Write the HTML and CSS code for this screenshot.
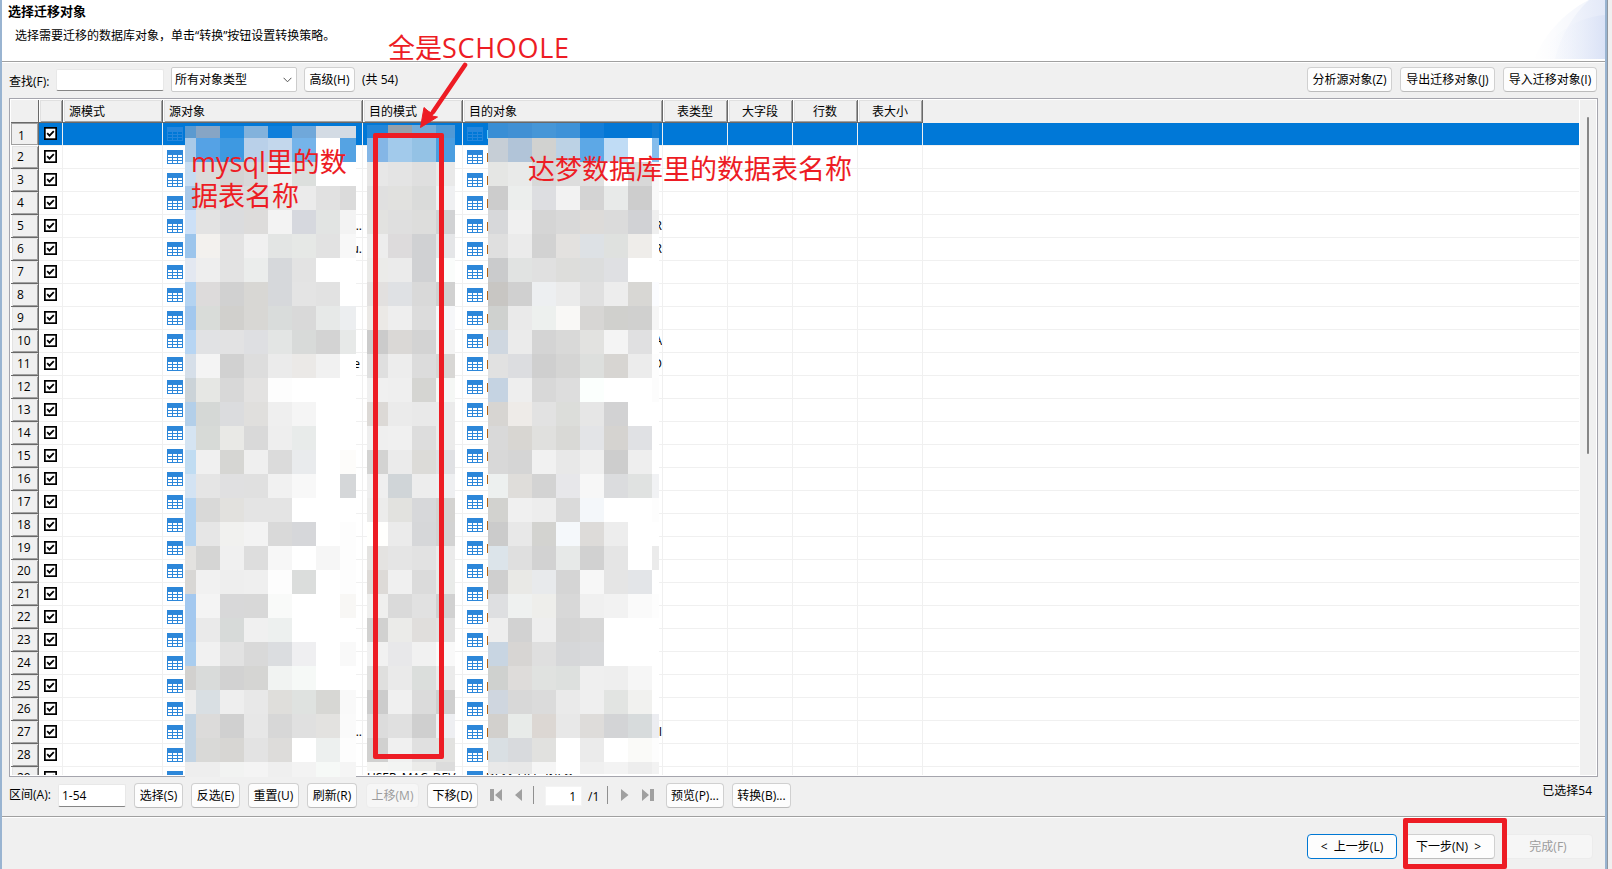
FILE: index.html
```html
<!DOCTYPE html>
<html lang="zh-CN">
<head>
<meta charset="utf-8">
<title>选择迁移对象</title>
<link rel="stylesheet" href="styles.css">
</head>
<body>
<svg class="defs" width="0" height="0" aria-hidden="true">
  <symbol id="table-icon" viewBox="0 0 16 14"><path fill="currentColor" fill-rule="evenodd" d="M0 0h16v14H0zM1 5v2h4V5zM6 5v2h4V5zM11 5v2h4V5zM1 8v2h4V8zM6 8v2h4V8zM11 8v2h4V8zM1 11v2h4v-2zM6 11v2h4v-2zM11 11v2h4v-2z"/></symbol>
  <symbol id="check-icon" viewBox="0 0 13 13"><path fill="#000" d="M0 0h13v13H0z"/><path fill="#fff" d="M1.7 1.7h9.6v9.6H1.7z"/><path fill="none" stroke="#000" stroke-width="1.8" d="M3.2 6.2l2.3 2.4 4.3-4.5"/></symbol>
</svg>
<div class="window">
  <header class="banner">
    <div class="banner-text">
      <h1 class="title">选择迁移对象</h1>
      <p class="subtitle">选择需要迁移的数据库对象，单击“转换”按钮设置转换策略。</p>
    </div>
    <svg class="banner-art" width="75" height="59" viewBox="0 0 75 59">
      <defs><linearGradient id="fade"><stop offset="0" stop-color="#fff"/><stop offset="1" stop-color="#e3e9f8"/></linearGradient>
      <linearGradient id="fade2"><stop offset="0.1" stop-color="#fff" stop-opacity="0"/><stop offset="1" stop-color="#dae2f6"/></linearGradient></defs>
      <path fill="url(#fade)" d="M4 59C14 36 32 14 59 0H75V59z"/>
      <path fill="#fff" opacity=".45" d="M4 59C14 36 32 14 59 0C42 16 31 36 25 59z"/>
      <path fill="url(#fade2)" d="M4 59C24 34 46 17 75 15V59z"/>
    </svg>
  </header>

  <div class="toolbar">
    <span class="find-label">查找(F):</span>
    <span class="field find-field"></span>
    <span class="select">所有对象类型<svg width="9" height="6" viewBox="0 0 9 6"><path d="M.6.8l3.9 4 3.9-4" fill="none" stroke="#555" stroke-width="1"/></svg></span>
    <span class="btn w51">高级(H)</span>
    <span class="count">(共 54)</span>
    <span class="spacer"></span>
    <span class="btn w85">分析源对象(Z)</span>
    <span class="btn w95">导出迁移对象(J)</span>
    <span class="btn w94">导入迁移对象(I)</span>
  </div>

  <div class="frame">
    <div class="grid" id="grid">
      <div class="row head">
        <span class="corner"></span><span class="hcell"></span><span class="hcell">源模式</span><span class="hcell">源对象</span><span class="hcell">目的模式</span><span class="hcell">目的对象</span><span class="hcell mid">表类型</span><span class="hcell mid">大字段</span><span class="hcell mid">行数</span><span class="hcell mid">表大小</span><span class="hrest"></span>
      </div>
    </div>
    <div class="scrollbar"><div class="thumb"></div></div>
  </div>

  <div class="pager">
    <span class="range-label">区间(A):</span>
    <span class="field range-field">1-54</span>
    <span class="btn w49">选择(S)</span>
    <span class="btn w49">反选(E)</span>
    <span class="btn w51">重置(U)</span>
    <span class="btn w50">刷新(R)</span>
    <span class="btn w53 off up">上移(M)</span>
    <span class="btn w51">下移(D)</span>
    <svg class="nav" width="34" height="12" viewBox="0 0 34 12"><path fill="#a0a0a0" d="M0 0h4v12H0zM12 0v12L5 6zM32 0v12L25 6z"/></svg>
    <i class="sep"></i>
    <span class="page-field">1</span>
    <span class="pages">/1</span>
    <i class="sep sep2"></i>
    <svg class="nav" width="33" height="12" viewBox="0 0 33 12"><path fill="#a0a0a0" d="M0 0v12l7.500-6zM21 0v12l7-6zM29 0h4v12h-4z"/></svg>
    <span class="btn w58 preview">预览(P)...</span>
    <span class="btn w59">转换(B)...</span>
    <span class="spacer"></span>
    <span class="selected-count">已选择54</span>
  </div>

  <footer class="actions">
    <span class="btn w90 focus">&lt;&nbsp; 上一步(L)</span>
    <span class="btn w90 next">下一步(N)&nbsp; &gt;</span>
    <span class="btn w90 off">完成(F)</span>
  </footer>
</div>

<div class="mosaic mosaic-src" id="mosaic-src"></div>
<div class="mosaic mosaic-schema" id="mosaic-schema"></div>
<div class="mosaic mosaic-dst" id="mosaic-dst"></div>

<div class="mark mark-column"></div>
<div class="mark mark-next"></div>
<svg class="arrow" width="60" height="70" viewBox="0 0 60 70"><path d="M50 3L18 50" stroke="#ed1c24" stroke-width="4.600" stroke-linecap="round"/><path fill="#ed1c24" stroke="#ed1c24" stroke-width="1" stroke-linejoin="round" d="M5.500 65.500L9 45.500 13 49 18 52 17 54 22.500 55z"/></svg>
<div class="note note-schema">全是<span class="wide">SCHOOLE</span></div>
<div class="note note-src">mysql里的数<br>据表名称</div>
<div class="note note-dst">达梦数据库里的数据表名称</div>
<script src="app.js"></script>
</body>
</html>
```
FILE: styles.css
```css
* { box-sizing: border-box; }
html { height: 869px; overflow: hidden; }
body {
  margin: 0;
  position: relative;
  width: 1612px;
  height: 869px;
  overflow: hidden;
  background: #f0f0f0;
  color: #000;
  font: 12px/16px "Open Sans", "Noto Sans CJK SC", sans-serif;
  white-space: nowrap;
}
.defs { position: absolute; }
.window {
  width: 1608px;
  height: 869px;
  display: flex;
  flex-direction: column;
  border-left: 2px solid #99b4d1;
  border-right: 1px solid #8e96a0;
  box-shadow: inset -2px 0 #99b4d1;
  padding-right: 2px;
}
.banner {
  height: 63px;
  flex: none;
  display: flex;
  justify-content: space-between;
  background: linear-gradient(#fff 61px, #a0a0a0 61px, #a0a0a0 62px, #fff 62px);
}
.title { margin: 3px 0 0 6px; font-size: 13px; line-height: 17px; font-weight: 700; }
.subtitle { margin: 8px 0 0 13px; }
.banner-art { display: block; }

.toolbar { height: 35px; flex: none; display: flex; align-items: flex-start; padding: 4px 8px 0 7px; }
.find-label { width: 47px; padding-top: 7px; }
.field {
  background: #fff;
  border: 1px solid #e8e8e8;
  border-bottom-color: #868686;
  border-radius: 2px;
}
.find-field { width: 108px; height: 22px; margin: 2px 7px 0 0; }
.select {
  width: 126px; height: 25px; margin-right: 7px; padding: 0 4px 0 3px;
  display: flex; align-items: center; justify-content: space-between;
  background: #fff; border: 1px solid #ccc; border-radius: 2px;
}
.count { padding: 5px 0 0 7px; }
.spacer { flex: 1; }
.btn {
  height: 25px; flex: none;
  line-height: 23px; text-align: center;
  background: #fdfdfd;
  border: 1px solid #d0d0d0;
  border-bottom-color: #bcbcbc;
  border-radius: 4px;
}
.btn + .btn { margin-left: 8px; }
.btn + .up { margin-left: 9px; }
.off { color: #9c9c9c; background: #f6f6f6; border-color: #ececec; }
.focus { border-color: #0078d4; }
.next { padding-right: 3px; }
.w49 { width: 49px; } .w50 { width: 50px; } .w51 { width: 51px; } .w53 { width: 53px; }
.w58 { width: 58px; } .w59 { width: 59px; } .w85 { width: 85px; } .w90 { width: 90px; }
.w94 { width: 94px; } .w95 { width: 95px; }

.frame {
  width: 1589px; height: 679px; flex: none;
  margin-left: 7px; padding: 1px 1px 0;
  display: flex; justify-content: space-between;
  background: #fff; border: 1px solid #a5a5ad;
}
.grid { width: 1568px; height: 675px; overflow: hidden; }
.row {
  display: grid; height: 23px;
  grid-template-columns: 28px 24px 100px 200px 100px 200px 65px 65px 65px 65px 1fr;
}
.cell {
  display: flex; align-items: center; overflow: hidden;
  border-right: 1px solid #f0f0f0; border-bottom: 1px solid #f0f0f0;
}
.cell:last-child { border-right: 0; }
.picked .cell { background: #0078d7; }
.corner, .hcell, .hrest { background: #f0f0f0; }
.corner { box-shadow: inset -1px -1px #696969; }
.hcell {
  padding: 4px 0 0 6px;
  border-right: 1px solid #696969; border-bottom: 1px solid #696969;
  box-shadow: inset 1px 0 #fff, inset 2px 1px #e0e0e0, inset -1px -1px #a0a0a0;
}
.mid { padding-left: 0; text-align: center; }
.num {
  padding: 3px 0 0 6px;
  background: #f0f0f0;
  border-right: 1px solid #696969; border-bottom: 1px solid #696969;
  box-shadow: inset 1px 0 #fff, inset 2px 1px #e3e3e3, inset -1px -1px #a0a0a0;
}
.picked .num { padding: 5px 0 0 7px; box-shadow: inset 0 0 0 1px #a0a0a0; border-bottom-color: #fff; }
.check { padding-left: 5px; }
.check svg { width: 13px; height: 13px; display: block; margin-top: -2px; }
.obj { padding-left: 4px; }
.obj svg { flex: none; width: 16px; height: 14px; color: #2d87d9; }
.picked .obj svg { color: #2f8ade; background: #0078d7; opacity: .8; }
.stem { width: 1px; height: 9px; margin-left: 4px; background: #b46414; }
.picked .stem { background: #60cdff; }
.name { margin: 0 0 0 3px; }
.schema { padding-left: 4px; }
.tail { margin-left: auto; }
.tail-e { margin-right: 2px; }
.scrollbar { width: 16px; height: 675px; background: #f0f0f0; padding: 17px 0 0 7px; }
.thumb { width: 2px; height: 337px; background: #868686; border-radius: 1px; }

.pager { height: 41px; flex: none; display: flex; align-items: flex-start; padding: 6px 13px 0 7px;
  background: linear-gradient(transparent 39px, #a0a0a0 39px, #a0a0a0 40px, #fff 40px); }
.range-label { width: 49px; padding-top: 4px; }
.range-field { width: 68px; height: 23px; margin: 1px 8px 0 0; padding-left: 3px; line-height: 21px; }
.nav { flex: none; margin: 6px 0 0 12px; }
.sep { width: 1px; height: 18px; margin: 3px 0 0 9px; background: #909090; }
.page-field { width: 37px; height: 20px; margin: 3px 0 0 11px; padding: 2px 5px 0 0; text-align: right; background: #fff; border: 1px solid #f4f4f4; }
.pages { width: 12px; margin: 6px 0 0 6px; }
.sep2 { margin-left: 7px; }
.sep2 + .nav { margin-left: 13px; }
.preview { margin-left: 12px; }

.actions { flex: 1; display: flex; justify-content: flex-end; padding: 16px 12px 0 0; }

.mosaic { position: absolute; display: grid; }
.mosaic-src { left: 185px; top: 126px; grid-template: 12px repeat(26, 24px) 15px / 11px repeat(6, 24px) 16px; }
.mosaic-schema { left: 367px; top: 125px; grid-template: 13px repeat(26, 24px) 9px / 21px 24px 24px 19px; }
.mosaic-dst { left: 488px; top: 123px; grid-template: 15px repeat(26, 24px) 12px / 20px repeat(6, 24px) 7px; }

.mark { position: absolute; border: 5px solid #ed1c24; border-radius: 2px; }
.mark-column { left: 373px; top: 133px; width: 71px; height: 626px; }
.mark-next { left: 1403px; top: 818px; width: 104px; height: 51px; }
.arrow { position: absolute; left: 415px; top: 62px; }
.note { position: absolute; color: #ed1c24; font-size: 27px; line-height: 34px; }
.note-schema { left: 388px; top: 31px; }
.wide { letter-spacing: .7px; }
.note-src { left: 191px; top: 145px; }
.note-dst { left: 528px; top: 152px; }
```
FILE: app.js
```js
const use = (id) => `<svg><use href="#${id}"/></svg>`;
const srcTails = { 5: '...', 6: 'u.', 11: 'e', 27: '...' };
const dstTails = { 5: 'R', 6: 'R', 10: 'A', 11: 'D', 27: 'I' };

let rows = '';
for (let n = 1; n <= 29; n++) {
  const tail = (t) => (t ? `<span class="tail${t === 'e' ? ' tail-e' : ''}">${t}</span>` : '');
  const last = n === 29;
  rows += `<div class="row${n === 1 ? ' picked' : ''}">` +
    `<span class="num">${n}</span>` +
    `<span class="cell check">${use('check-icon')}</span>` +
    '<span class="cell"></span>' +
    `<span class="cell obj">${use('table-icon')}${tail(srcTails[n])}</span>` +
    `<span class="cell schema">${last ? 'USER_MAC_DEV' : ''}</span>` +
    `<span class="cell obj">${use('table-icon')}${last ? '<span class="name">DEM_FILE_INFO</span>' : '<i class="stem"></i>'}${tail(dstTails[n])}</span>` +
    '<span class="cell"></span>'.repeat(5) +
    '</div>';
}
document.getElementById('grid').insertAdjacentHTML('beforeend', rows);

const mosaics = {
  'mosaic-src': `
5b9ad0 86a5c5 268ee0 82b2dc 0f7fdb 70a8da d3dbe4 d3dbe4
a9cae8 55a2e5 3e99e1 b9d0e9 c3d7ec 75b4ea ffffff 55a3e3
c6dcf1 dcdbda d4d4d3 d8d8d8 f0f0f0 dcdfdd ffffff ffffff
a9c8e8 dcdcdb dddddd dcdcdb e8e8e8 ebebeb e1e1e1 dbdbdb
cce0f7 e3e3e3 dbdcde dddcdb f3f3f3 d6d8de e2e4e3 f3f3f3
9cc5ec f3f1ee e3e3e3 f0f0f0 e3e5e4 e6e8e6 e2e2e2 f8f8f8
e3e8f1 eeeeee e3e3e3 ebedec d6d8db e3e3e3 ffffff ffffff
b4d3f1 dddbdb d1d1d1 d8d7d4 d6d8db e4e4e4 e2e2e2 ffffff
a3c8ee d9dcd9 d1d0cd d8d7d4 d9dcdb d9d9d9 e7e9e8 eceef0
b7d5f3 e1e2e4 e2e2e3 dedfe2 e3e5e4 d8dad9 d3d3d3 e7e9e8
d6dfe9 f4f4f4 d1d1d1 dddddd ebebeb ebe9e7 f1f1f1 ffffff
cbd3d8 e6e7e4 d8d8d8 e3e2e1 fdfdfd ffffff ffffff ffffff
b3cfe9 d5d8d6 dbdcde e0dfdd efefef f5f5f5 ffffff ffffff
d5e4f2 d7dad7 e9e9e6 d9d9d9 eeeeee e8ebea ffffff ffffff
c0dcf2 f0f0f0 d6d6d3 efefef dbdbdb e9ebed ffffff fdfcfa
d3e3f3 e5e5e5 e0e0e1 e0e0e0 f1f1f1 f8f8f8 ffffff d5d7d9
b3d3f1 d9d9d8 e2e1de e4e4e4 e4e4e4 ffffff ffffff ffffff
b3d3f1 e6e6e6 f1f1ef f3f3f3 d9d9d9 d6d7da ffffff fdfdfd
e3e2e0 d5d5d4 f0f0f0 dddddd f7f7f7 ffffff f6f6f6 fdfdfd
d8d7d5 f1f1f1 eeeeee efefef fdfdfd dbdddc ffffff fdfdfd
a3c8ef f4f4f4 d8d8d9 d8d8d8 f9faf9 ffffff ffffff f8f7f5
a3c8ef eaeaea d7dad9 f0f0f0 edf0ef ffffff ffffff ffffff
a9cdef f1f1f1 e2e2e2 d9d9d9 dbdde0 efeff1 ffffff f9f9f9
d2d1cf d9dbda d2d2d2 d5d5d3 f1f3f2 f6f9f7 ffffff ffffff
ededed d9dfe3 eeeeee e8e8e8 dfdedb dfe2e0 d7d7d4 f9f9f9
c2d4e4 dcdbda d0d0d0 e7e7e7 d7d7d7 e0e0e0 e3e2e0 fafafa
c2d4e4 d9d9d7 d7d6d3 e3e3e3 dddcda ffffff edf0ef fdfdfd
eeeeee eeeeee f2f3f2 f4f4f4 efefef f3f3f3 f6f9f7 f5f5f5`,
  'mosaic-schema': `
2386d8 96a0a9 74abd8 4f99d6
84b6e6 a2caeb 94c2e5 4b9ee0
e7e7e7 e4e4e4 dfdfdf e9e9e9
e0e0e0 e1e1df dadbda eff0f2
e2e2e0 dfdfdf dddddc d1d2d4
ededed dddbdc d0d1d3 e5e6e8
ebebe9 ebebeb d0d1d3 fafcfb
e2e0df dfe1e4 d9d9d9 d1d1d1
ebe9e6 eeeeee dcdcdc f6f7f9
cbcbcb dad8d6 d3d3d3 f3f3f3
dfdfdf ededed dcdcdc d8d7d5
f0f0f0 efefef d5d5d2 f5f7f5
dcd9d6 ebebeb e9e9e9 ebebeb
efefef f0f0f0 dddddd ebebeb
d3d3d2 ebebeb dcdbd8 e0e1e4
efefef d0d5d8 ededed eeeff1
ececeb e2e2df d7d8da d4d3d1
fffffd ebebeb d6d7d9 d3d3d3
e4e3e1 e5e5e5 e2e2e2 ebebeb
dddad7 f0f0f0 dbdbdb e9ebe9
efefee dadada e1e1e1 d1d1d1
d1d1d0 ebebe9 e0dedc e2e2e2
f1f1f1 e8e8ea f1f1f1 f9f9f9
dfdfde eaeaea dbdedc ebebeb
cccccc f0f0f0 dbdbdb cfcfcf
dcdcdc e0e0e0 cfcfcf eeeff2
d1d1d0 f0f0f0 e0e0e0 e2e2e0
f5f5f3 f3f4f3 ebebe9 dcdcdc`,
  'mosaic-dst': `
398ed5 4190d4 4696d7 3e92d8 137ed9 0377d5 0277d6 127dd5
c6ced6 b1c4d8 d1d2d0 bcd2e5 5da8e6 c0dcf5 ffffff 86bdec
e5e6e4 e9eae9 d8d8d8 dddddd e0e0e0 ffffff d8d8d8 f8f8f8
cccccc eceeed dddee1 f2f2f2 d4d4d4 e8eae9 cdcdcd f9f9f9
d7d8da f0f0f0 d5d5d5 d9d9d9 dddbd9 dbdbdb d1d2d5 efefef
dfdfdf ebebeb d2d2d2 e3e1df dde1e5 dfe1df efedea ffffff
cacbcc e1e3e2 e0e0e0 dddddb dcdddd dfe0e3 ffffff ffffff
c8c6c3 d0d0d0 edeff1 ebebeb e0e0e0 ededed d8d7d4 fbfcff
cfd1cf eaeaea edf0ee f9f8f6 d7d6d4 d0d0cd d0d0cf f6f6f6
cfd7e0 ebebeb d4d4d4 d9d9d8 e2e2e0 f4f4f4 e0e0e1 ffffff
e1e1e1 dcdde0 cfcfcf d5d5d4 dddfdd d7d5d2 ececec fdfdfd
c5d3e2 eeeeee d8d8d8 dddddd fbfffd ffffff ffffff fcfcfc
d7d5d2 eeebe8 e2e2e2 dcddda e6e6e6 d2d2d3 ffffff ffffff
d9d9d9 d8d6d2 e0e0de d9d9d6 e3e4e7 d5d3d0 e0e1e4 ffffff
d8d8d8 d5d5d5 f1f1f1 e8e8e8 efefef cdcdcd eeeeee ffffff
edf0ef dfddda d3d3d3 e7e7ea f7f7f7 dbdcde e0e2e1 f1f2f4
d2d2cf f0f0f0 ededed dadada f4f7fa ffffff ffffff fdfdfd
cbcbcb e8e8e8 d3d3d0 f5f8fb dddbd9 ededed ffffff ffffff
dce4ea dfdfdf d2d2d2 e7e9e8 d1d1d1 e5e5e5 ffffff ebebeb
cfcfcf e9e9e6 e8eaec d5d5d5 f7f7f7 e5e5e5 e3e5e8 ffffff
dedfe1 eff1f0 eeeeeb d8d8d8 f0f0f0 f2f2f2 fafafa fdfdfd
eeeeee d2d2d2 eeeeee d5d5d5 d7d7d7 ffffff ffffff ffffff
c8d5e2 d7d5d3 dfdfdf d6d7d9 d8d9db ffffff ffffff ffffff
cfd1cf dedcda e0e2e0 dde0de efefef eeeeee f6f6f6 ffffff
cfd6df d8d8d8 dbdbdb eaeaea efefef e2e4e2 f1f1ef ffffff
d2d0cd e8ebe9 dcd7d3 e8e8e8 dedcda d3d4d6 d7dbdc ecedf1
d9dfe3 d8dadd e1e1df ffffff ebebeb ffffff fafaf8 fdfdfd
e9e9e9 e8e8e8 f5f5f5 ffffff f0f0f0 f3f3f3 ededed f2f2f2`,
};
for (const [id, data] of Object.entries(mosaics)) {
  document.getElementById(id).innerHTML = data.trim().split(/\s+/)
    .map((c) => `<i style="background:#${c}"></i>`).join('');
}
```
